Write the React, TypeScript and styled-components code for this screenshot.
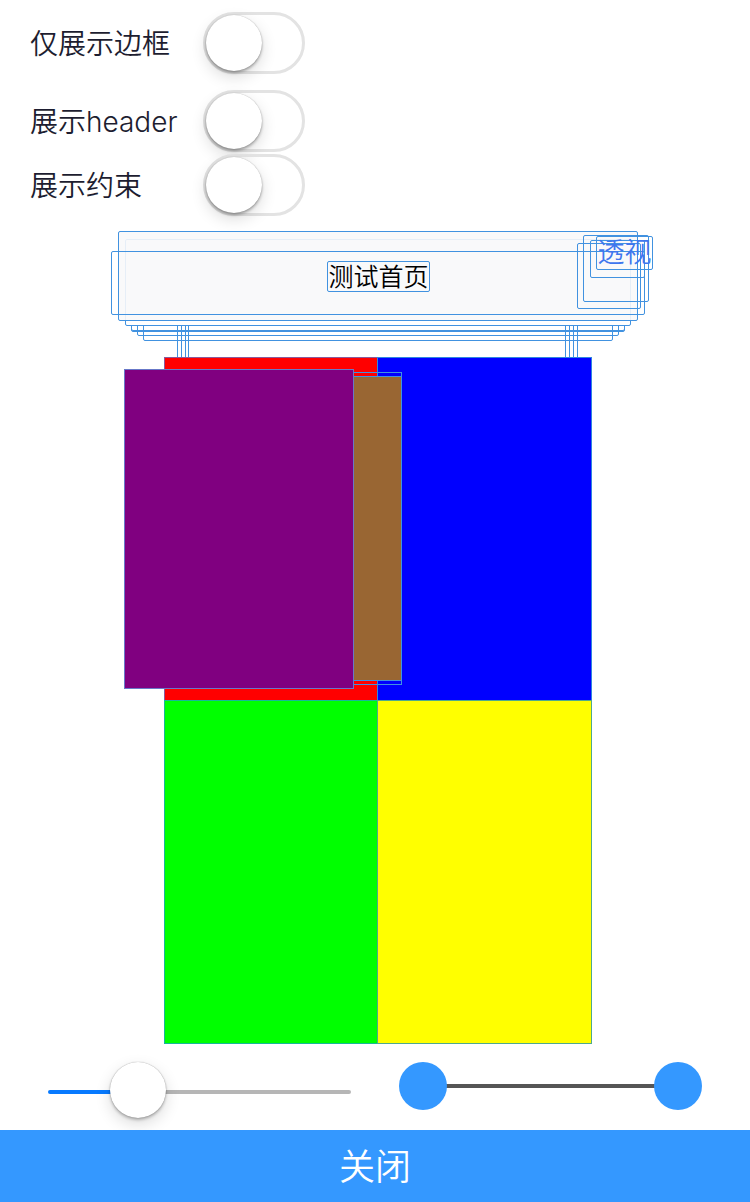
import React, { useId, useState } from "react";
import styled, { createGlobalStyle, css } from "styled-components";

const GlobalStyle = createGlobalStyle`
  * { box-sizing: border-box; }
  body {
    margin: 0;
    background: #fff;
    color: #1d1d30;
    font-family: Inter, "Noto Sans CJK SC", sans-serif;
    font-weight: 350;
  }
`;

const Page = styled.main`
  display: flex;
  flex-direction: column;
  min-height: 100vh;
  overflow-x: hidden;
`;

const Settings = styled.section`
  display: flex;
  flex-direction: column;
  gap: 16px;
  padding: 12px 30px 8px;
`;

const SettingGroup = styled.div`
  display: flex;
  flex-direction: column;
  gap: 2px;
`;

const SettingRow = styled.div`
  display: grid;
  grid-template-columns: 173px auto;
  justify-content: start;
  align-items: center;
`;

const SettingLabel = styled.label`
  padding-top: 2px;
  font-size: 28px;
  line-height: 40px;
  white-space: nowrap;
`;

const Switch = styled.input`
  appearance: none;
  display: flex;
  width: 102px;
  height: 62px;
  margin: 0;
  border: 3px solid #e3e3e3;
  border-radius: 31px;
  background: ${(p) => (p.checked ? "#3498ff" : "transparent")};
  cursor: pointer;

  &::before {
    content: "";
    width: 56px;
    height: 56px;
    margin-left: ${(p) => (p.checked ? "40px" : "0")};
    border-radius: 50%;
    background: #fff;
    box-shadow:
      0 0 1px rgba(0, 0, 0, 0.3),
      0 2px 3px rgba(0, 0, 0, 0.3),
      0 6px 16px rgba(0, 0, 0, 0.14);
  }
`;

const Scene = styled.section`
  position: relative;
  width: 556px;
  height: 820px;
  margin: 0 auto;
`;

interface LayerProps {
  $x: number;
  $y: number;
  $w: number;
  $h: number;
  $fill?: string;
  $line?: string;
}

const Layer = styled.div<LayerProps>`
  position: absolute;
  left: ${(p) => p.$x}px;
  top: ${(p) => p.$y}px;
  width: ${(p) => p.$w}px;
  height: ${(p) => p.$h}px;
  border: 1px solid ${(p) => p.$line ?? "#4192e0"};
  background: ${(p) => p.$fill ?? "transparent"};
`;

const OutlineLayer = styled(Layer)`
  border-radius: 2px;
`;

const TextLayer = styled(OutlineLayer)<{ $size: number; $color: string }>`
  display: flex;
  align-items: center;
  justify-content: center;
  font-size: ${(p) => p.$size}px;
  line-height: 32px;
  color: ${(p) => p.$color};
  white-space: nowrap;
`;

const Controls = styled.section`
  display: grid;
  grid-template-columns: 1fr 1fr;
  align-items: start;
  gap: 48px;
  padding: 18px 48px 8px;
`;

const ZoomSlider = styled.input<{ $percent: number }>`
  appearance: none;
  width: 100%;
  height: 60px;
  margin: 0;
  background: transparent;

  &::-webkit-slider-runnable-track {
    height: 4px;
    border-radius: 2px;
    background: linear-gradient(
      to right,
      #077aff ${(p) => p.$percent}%,
      #b6b6b6 ${(p) => p.$percent}%
    );
  }

  &::-webkit-slider-thumb {
    appearance: none;
    width: 56px;
    height: 56px;
    margin-top: -28px;
    border-radius: 50%;
    background: #fff;
    box-shadow:
      0 0 1px rgba(0, 0, 0, 0.4),
      0 2px 3px rgba(0, 0, 0, 0.25),
      0 6px 16px rgba(0, 0, 0, 0.14);
  }
`;

const RangeTrack = styled.div`
  display: grid;
  align-items: center;
  height: 48px;
  background: linear-gradient(#555, #555) center / calc(100% - 48px) 4px no-repeat;
`;

const thumb = css`
  appearance: none;
  width: 48px;
  height: 48px;
  border-radius: 50%;
  background: #3498ff;
  pointer-events: auto;
`;

const RangeInput = styled.input`
  appearance: none;
  grid-area: 1 / 1;
  width: 100%;
  height: 48px;
  margin: 0;
  background: transparent;
  pointer-events: none;

  &::-webkit-slider-thumb {
    ${thumb}
  }
`;

const CloseButton = styled.button`
  position: relative;
  height: 72px;
  margin-top: auto;
  padding: 2px 0 0;
  border: 0;
  background: #3498ff;
  color: #fff;
  font-family: inherit;
  font-size: 36px;
  font-weight: inherit;
  line-height: 70px;
  cursor: pointer;
`;

type Box = [x: number, y: number, w: number, h: number, fill?: string, line?: string];

const guideBoxes: Box[] = [
  [80, 90, 401, 60],
  [84, 90, 393, 60],
  [88, 90, 385, 60],
  [91, 90, 378, 60],
  [46, 40, 470, 77],
  [40, 35, 482, 77],
  [34, 30, 494, 77],
  [34, 30, 494, 78],
];

const headerBoxes: Box[] = [
  [28, 15, 506, 87, "#fff"],
  [21, 7, 520, 90, "rgba(248, 248, 249, 0.9)"],
  [14, 27, 534, 64],
  [480, 19, 64, 66],
  [486, 11, 66, 67],
  [493, 16, 55, 38],
];

const contentBoxes: Box[] = [
  [67, 133, 214, 344, "#f00", "#8a5a9a"],
  [280, 133, 215, 344, "#00f", "#2f86e0"],
  [67, 476, 214, 344, "#0f0", "#17b79a"],
  [280, 476, 215, 344, "#ff0", "#4fa98c"],
  [75, 148, 230, 313],
  [75, 152, 230, 305, "#963"],
  [27, 145, 230, 320, "purple", "#6878c8"],
];

function SettingSwitch({ label }: { label: string }) {
  const id = useId();
  const [on, setOn] = useState(false);
  return (
    <SettingRow>
      <SettingLabel htmlFor={id}>{label}</SettingLabel>
      <Switch
        id={id}
        type="checkbox"
        role="switch"
        checked={on}
        onChange={(e) => setOn(e.target.checked)}
      />
    </SettingRow>
  );
}

export default function App() {
  const [zoom, setZoom] = useState(25);
  return (
    <>
      <GlobalStyle />
      <Page>
        <Settings>
          <SettingSwitch label="仅展示边框" />
          <SettingGroup>
            <SettingSwitch label="展示header" />
            <SettingSwitch label="展示约束" />
          </SettingGroup>
        </Settings>
        <Scene>
          {[...guideBoxes, ...headerBoxes].map(([x, y, w, h, fill, line], i) => (
            <OutlineLayer key={i} $x={x} $y={y} $w={w} $h={h} $fill={fill} $line={line} />
          ))}
          <TextLayer $x={230} $y={37} $w={103} $h={31} $size={25} $color="#000">
            测试首页
          </TextLayer>
          <TextLayer $x={499} $y={12} $w={57} $h={34} $size={27} $color="#3f76ee">
            透视
          </TextLayer>
          {contentBoxes.map(([x, y, w, h, fill, line], i) => (
            <Layer key={i} $x={x} $y={y} $w={w} $h={h} $fill={fill} $line={line} />
          ))}
        </Scene>
        <Controls>
          <ZoomSlider
            type="range"
            aria-label="缩放"
            value={zoom}
            $percent={zoom}
            onChange={(e) => setZoom(Number(e.target.value))}
          />
          <RangeTrack role="group" aria-label="层级范围">
            <RangeInput type="range" aria-label="最小层级" defaultValue={0} />
            <RangeInput type="range" aria-label="最大层级" defaultValue={100} />
          </RangeTrack>
        </Controls>
        <CloseButton type="button">关闭</CloseButton>
      </Page>
    </>
  );
}
